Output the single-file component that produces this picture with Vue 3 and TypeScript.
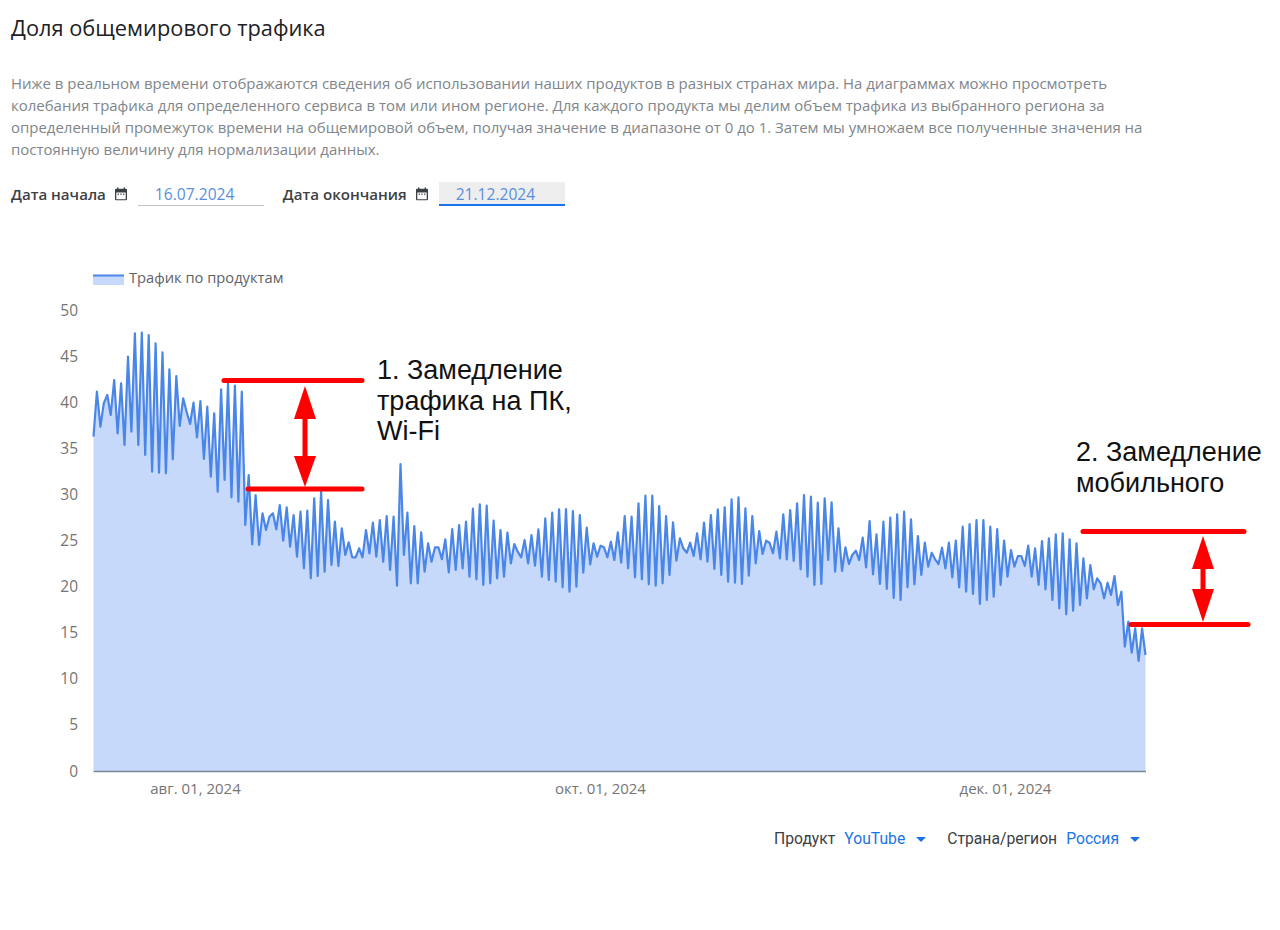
<script setup lang="ts">
// Sample values read from the chart, expressed as screen y inside four stretches.
const stretches: { base: number; zoomed: number[] }[] = [
  { base: 300, zoomed: [410,275,380,310,285,345,240,400,250,435,170,395,100,435,98,465,105,515,130,518,157,520,208,478,228,378,295,335,372,308,412,303,477,320,530,340,575,268,540,250,592,257,605,275,675,525,733,585,735,640,690,650,640,688,615,722,622,740,645,770,635,805,632,835,595,828,575,815,600,795,665,798,685,765,727,772,772,745,772,690,760,668,770,660,785,648,810,650,857,492] },
  { base: 470, zoomed: [255,128,340,168,340,187,305,220,275,232,232,268,208,307,177,300,165,295,155,320,116,328,103,345,107,340,152,325,180,320,188,280,222,245,262,210,280,195,287,178,320,145,330,128,335,118,352,117,365,123,350,135,308,173,283,220,260,227,232,262,215,270,187,278,138,295,140,322,100,328,77,343,77,347,108,340,138,315,157,272,205,235,248,218,258,190,268,158,275,135,297,118] },
  { base: 470, zoomed: [315,112,335,88,338,82,342,115,317,138,280,183,252,212,218,250,185,265,133,268,120,273,100,298,75,320,80,345,98,342,85,270,97,305,175,303,232,282,255,242,270,203,292,153,313,193,342,155,357,143,384,133,390,125,352,148,343,198,315,218,290,248,268,282,233,295,218,322,212,352,170,365,162,372,150,402,150,390,170,380,177,345,212,320,240,290,258,258,288,227,320,235,345,213,358] },
  { base: 510, zoomed: [85,270,73,295,70,313,88,302,100,285,145,265,165,238,205,220,265,218,255,198,285,245,410,335,428,355,453,355,435] },
];

const ys: number[] = stretches.flatMap((s) => s.zoomed.map((z) => s.base + z / 3));
const left = 93.5;
const right = 1145.5;
const floor = 771;
const step = (right - left) / (ys.length - 1);
const pts = ys.map((y, i) => `${(left + i * step).toFixed(1)},${y.toFixed(1)}`);
const linePath = `M${pts.join(' L')}`;
const areaPath = `M${left},${floor} L${pts.join(' L')} L${right},${floor} Z`;

const yTicks = [50, 45, 40, 35, 30, 25, 20, 15, 10, 5, 0].map((v) => ({
  label: String(v),
  y: floor - v * 9.22,
}));
const xTicks = [
  { label: 'авг. 01, 2024', x: 195.5 },
  { label: 'окт. 01, 2024', x: 600.5 },
  { label: 'дек. 01, 2024', x: 1005.5 },
];
const dates = [
  { label: 'Дата начала', value: '16.07.2024', active: false },
  { label: 'Дата окончания', value: '21.12.2024', active: true },
];
const filters = [
  { label: 'Продукт', value: 'YouTube' },
  { label: 'Страна/регион', value: 'Россия' },
];
</script>

<template>
  <main class="page">
    <h1 class="title">Доля общемирового трафика</h1>
    <p class="intro">
      Ниже в реальном времени отображаются сведения об использовании наших продуктов в разных странах мира. На диаграммах можно просмотреть колебания трафика для определенного сервиса в том или ином регионе. Для каждого продукта мы делим объем трафика из выбранного региона за определенный промежуток времени на общемировой объем, получая значение в диапазоне от 0 до 1. Затем мы умножаем все полученные значения на постоянную величину для нормализации данных.
    </p>
    <div class="dates">
      <div v-for="d in dates" :key="d.label" class="date">
        <span class="date-label">{{ d.label }}</span>
        <svg class="cal" viewBox="0 0 14 14" width="14" height="14">
          <path d="M3 0.5h1.4v1.3h5.2V0.5H11v1.3h1a1 1 0 0 1 1 1v9.4a1 1 0 0 1-1 1H2a1 1 0 0 1-1-1V2.8a1 1 0 0 1 1-1h1zM2.3 5.4v6.9h9.4V5.4z" fill="#3c4043" />
          <rect x="3.6" y="6.6" width="1.4" height="1.2" fill="#3c4043" />
          <rect x="6.3" y="6.6" width="1.4" height="1.2" fill="#3c4043" />
          <rect x="9" y="6.6" width="1.4" height="1.2" fill="#3c4043" />
        </svg>
        <span class="date-input" :class="{ active: d.active }">{{ d.value }}</span>
      </div>
    </div>

    <div class="chart-wrap">
      <svg class="chart" viewBox="0 260 1280 560" width="1280" height="560">
        <rect x="93" y="275" width="31" height="10" fill="#c6d9fa" />
        <rect x="93" y="274.5" width="31" height="2" fill="#4a86e8" />
        <text x="129" y="283" class="legend">Трафик по продуктам</text>

        <text v-for="t in yTicks" :key="t.label" x="78" :y="t.y + 5.5" text-anchor="end" class="tick">{{ t.label }}</text>
        <text v-for="t in xTicks" :key="t.label" :x="t.x" y="794" text-anchor="middle" class="tick small">{{ t.label }}</text>

        <path :d="areaPath" fill="#c6d9fa" />
        <path :d="linePath" fill="none" stroke="#4a86e8" stroke-width="2.2" stroke-linejoin="round" />
        <line x1="93.5" y1="771.5" x2="1146" y2="771.5" stroke="#7c8795" stroke-width="1.6" />

        <g fill="#ff0000" stroke="#ff0000" stroke-linecap="round">
          <line x1="224" y1="380.5" x2="362" y2="380.5" stroke-width="5" />
          <line x1="248" y1="489" x2="362" y2="489" stroke-width="5" />
          <line x1="305" y1="415" x2="305" y2="460" stroke-width="5" stroke-linecap="butt" />
          <polygon points="305,386 294,419 316,419" stroke="none" />
          <polygon points="305,487 294,456 316,456" stroke="none" />

          <line x1="1083" y1="531.5" x2="1244" y2="531.5" stroke-width="5" />
          <line x1="1131" y1="624.5" x2="1248" y2="624.5" stroke-width="5" />
          <line x1="1203" y1="565" x2="1203" y2="592" stroke-width="5" stroke-linecap="butt" />
          <polygon points="1203,536 1192,569 1214,569" stroke="none" />
          <polygon points="1203,622 1192,589 1214,589" stroke="none" />
        </g>
      </svg>
      <div class="note note-one">1. Замедление<br />трафика на ПК,<br />Wi-Fi</div>
      <div class="note note-two">2. Замедление<br />мобильного</div>
    </div>

    <div class="filters">
      <div v-for="f in filters" :key="f.label" class="filter">
        <span class="filter-label">{{ f.label }}</span>
        <span class="filter-value">{{ f.value }}</span>
        <svg class="caret" viewBox="0 0 10 5" width="10" height="5"><path d="M0 0h10L5 5z" fill="#1a73e8" /></svg>
      </div>
    </div>
  </main>
</template>

<style scoped>
.page {
  width: 1280px;
  height: 930px;
  position: relative;
  overflow: hidden;
  background: #fff;
  font-family: "Open Sans", sans-serif;
}
.title {
  margin: 0;
  padding: 14px 0 0 11px;
  font-size: 21.8px;
  line-height: 28px;
  font-weight: 400;
  color: #202124;
}
.intro {
  margin: 29.5px 0 0 11px;
  width: 1140px;
  font-size: 14.97px;
  line-height: 22.3px;
  color: #80868b;
}
.dates {
  display: flex;
  gap: 19px;
  margin: 21.5px 0 0 11px;
}
.date {
  display: flex;
  align-items: center;
}
.date-label {
  font-size: 15.1px;
  font-weight: 600;
  color: #3c4043;
  margin-right: 8px;
}
.cal {
  margin-right: 10px;
}
.date-input {
  width: 126px;
  height: 24px;
  box-sizing: border-box;
  padding-left: 17px;
  border-bottom: 1px solid #bdc1c6;
  font-size: 15.6px;
  line-height: 25px;
  color: #5b8fdc;
}
.date-input.active {
  background: #eeeeee;
  border-bottom: 2px solid #1a73e8;
}
.chart-wrap {
  position: relative;
  margin-top: 54px;
  height: 560px;
}
.chart {
  display: block;
}
.legend {
  font-family: "Open Sans", sans-serif;
  font-size: 14.7px;
  fill: #5f6368;
}
.tick {
  font-family: "Open Sans", sans-serif;
  font-size: 15.5px;
  fill: #757575;
}
.tick.small {
  font-size: 15px;
}
.note {
  position: absolute;
  font-family: "Liberation Sans", sans-serif;
  font-size: 27px;
  line-height: 30.5px;
  color: #111;
}
.note-one {
  left: 377px;
  top: 95px;
}
.note-two {
  left: 1076px;
  top: 177px;
}
.filters {
  display: flex;
  justify-content: flex-end;
  gap: 21px;
  width: 1140px;
  margin-top: 9px;
  font-family: Roboto, sans-serif;
  font-size: 15.7px;
  line-height: 20px;
}
.filter {
  display: flex;
  align-items: center;
}
.filter-label {
  color: #3c4043;
  margin-right: 9px;
}
.filter-value {
  color: #1a73e8;
  margin-right: 11px;
}
</style>
